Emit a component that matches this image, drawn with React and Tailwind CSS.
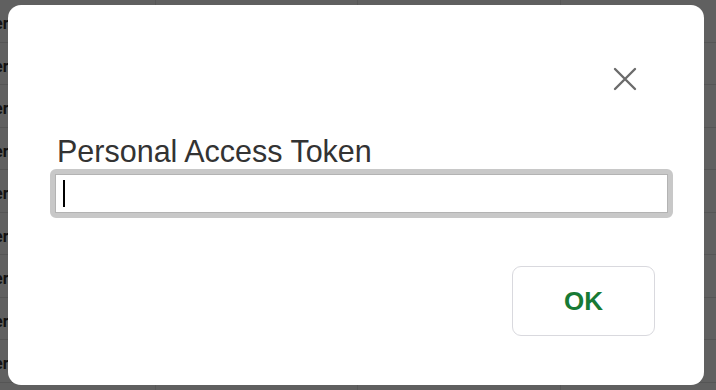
import { useState } from "react";

const rows = Array.from({ length: 10 });

const Backdrop = () => (
  <div className="absolute inset-0 bg-[#606060] overflow-hidden">
    {rows.map((_, i) => (
      <div
        key={i}
        className="h-[42.5px] border-b border-[#555] relative flex items-center"
      >
        <span className="absolute left-[-6px] top-[12px] text-[16px] font-bold text-[#111] font-['Roboto',sans-serif]">
          er
        </span>
      </div>
    ))}
    <div className="absolute top-0 bottom-0 left-[155px] w-px bg-[#575757]" />
    <div className="absolute top-0 bottom-0 left-[357px] w-px bg-[#575757]" />
    <div className="absolute top-0 bottom-0 left-[560px] w-px bg-[#575757]" />
  </div>
);

const CloseIcon = () => (
  <svg width="24" height="24" viewBox="0 0 24 24">
    <path
      d="M2 2 L22 22 M22 2 L2 22"
      stroke="#6b6b6b"
      strokeWidth="2.4"
      strokeLinecap="round"
    />
  </svg>
);

export default function App() {
  const [token, setToken] = useState("");

  return (
    <div className="relative w-[716px] h-[390px] overflow-hidden font-['Liberation_Sans',Arial,sans-serif]">
      <Backdrop />

      <div className="absolute left-[8px] top-[5px] w-[696px] h-[380px] bg-white rounded-[13px] flex flex-col px-[42px]">
        <div className="flex justify-end pt-[62px] pr-[25px]">
          <button className="w-[24px] h-[24px]">
            <CloseIcon />
          </button>
        </div>

        <label className="mt-[43px] ml-[7px] text-[30.5px] leading-[34px] text-[#333]">
          Personal Access Token
        </label>

        <div className="mt-[1px] w-[623px] h-[49px] rounded-[6px] border-[5px] border-[#c8c8c8]">
          <div className="w-full h-full border border-[#b3b3b3] bg-white flex items-center pl-[7px]">
            <div className="w-[2px] h-[27px] bg-black" />
            <input
              value={token}
              onChange={(e) => setToken(e.target.value)}
              className="flex-1 outline-none bg-transparent text-[18px]"
            />
          </div>
        </div>

        <div className="flex justify-end mt-[48px] pr-[7px]">
          <button className="w-[143px] h-[70px] rounded-[9px] border-[1.5px] border-[#d9d9de] bg-white text-[26px] font-bold text-[#177a34]">
            OK
          </button>
        </div>
      </div>
    </div>
  );
}
